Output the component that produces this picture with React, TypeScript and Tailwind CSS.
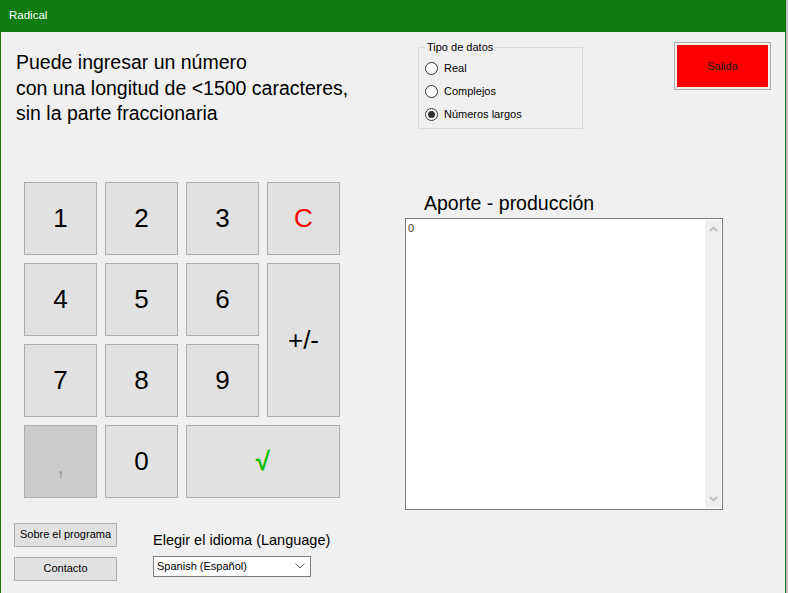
import React from "react";

const ui = { fontFamily: '"Liberation Sans", Arial, sans-serif' };

function Key({
  children, className = "", disabled, color = "text-black",
}: {
  children: React.ReactNode; className?: string; disabled?: boolean; color?: string;
}) {
  return (
    <button
      type="button"
      className={
        "flex items-center justify-center border border-[#adadad] text-[26px] leading-none " +
        (disabled ? "bg-[#cccccc] text-[#a0a0a0]" : "bg-[#e1e1e1] " + color) +
        " " + className
      }
    >
      {children}
    </button>
  );
}

function Radio({ label, checked }: { label: string; checked?: boolean }) {
  return (
    <div className="flex items-center h-[23px]">
      <span className="w-[13px] h-[13px] rounded-full border border-[#333333] bg-white flex items-center justify-center">
        {checked && <span className="w-[7px] h-[7px] rounded-full bg-[#333333]" />}
      </span>
      <span className="ml-[6px] text-[11px] text-black">{label}</span>
    </div>
  );
}

export default function App() {
  return (
    <div className="w-[788px] h-[593px] flex bg-[#bfc3bf] overflow-hidden" style={ui}>
      <div className="w-[786px] h-full flex flex-col border-x border-[#107c10] bg-[#f0f0f0]">
        {/* Title bar */}
        <div className="h-[32px] shrink-0 bg-[#107c10] text-white text-[11.5px] flex items-center pl-[9px] -mx-px">
          Radical
        </div>

        <div className="flex flex-1">
          {/* Left column */}
          <div className="w-[390px] pl-[13px] flex flex-col">
            <p className="mt-[18px] ml-[2px] text-[19.5px] leading-[25.5px] text-black">
              Puede ingresar un número
              <br />
              con una longitud de &lt;1500 caracteres,
              <br />
              sin la parte fraccionaria
            </p>

            <div className="mt-[55px] ml-[10px] grid grid-cols-[73px_73px_73px_73px] grid-rows-[73px_73px_73px_73px] gap-[8px]">
              <Key>1</Key>
              <Key>2</Key>
              <Key>3</Key>
              <Key color="text-[#ff0000]">C</Key>
              <Key>4</Key>
              <Key>5</Key>
              <Key>6</Key>
              <Key className="row-span-2">+/-</Key>
              <Key>7</Key>
              <Key>8</Key>
              <Key>9</Key>
              <Key disabled className="pt-[8px]">,</Key>
              <Key>0</Key>
              <Key className="col-span-2 font-bold" color="text-[#00c000]">√</Key>
            </div>

            <div className="mt-[25px] flex">
              <div className="flex flex-col gap-[10px]">
                <button type="button" className="w-[103px] h-[24px] border border-[#adadad] bg-[#e1e1e1] text-[11px] text-black">
                  Sobre el programa
                </button>
                <button type="button" className="w-[103px] h-[24px] border border-[#adadad] bg-[#e1e1e1] text-[11px] text-black">
                  Contacto
                </button>
              </div>
              <div className="ml-[36px] flex flex-col">
                <span className="mt-[8px] text-[14.5px] leading-[18px] text-black">
                  Elegir el idioma (Language)
                </span>
                <div className="mt-[7px] w-[158px] h-[21px] border border-[#7a7a7a] bg-white flex items-center justify-between pl-[3px] pr-[5px]">
                  <span className="text-[11px] text-black">Spanish (Español)</span>
                  <svg width="10" height="6" viewBox="0 0 10 6" fill="none">
                    <path d="M0.5 0.5 L5 5 L9.5 0.5" stroke="#606060" strokeWidth="1" />
                  </svg>
                </div>
              </div>
            </div>
          </div>

          {/* Right column */}
          <div className="flex flex-col pl-[14px]">
            <div className="flex items-start">
              <fieldset className="ml-[13px] mt-[8px] w-[165px] h-[89px] border border-[#dcdcdc] px-[6px]">
                <legend className="px-[2px] text-[11px] leading-[14px] text-black">Tipo de datos</legend>
                <div className="pt-[3px]">
                  <Radio label="Real" />
                  <Radio label="Complejos" />
                  <Radio label="Números largos" checked />
                </div>
              </fieldset>
              <div className="ml-[91px] mt-[10px] w-[97px] h-[48px] border border-[#adadad] p-[2px]">
                <div className="w-full h-full bg-[#ff0000] flex items-center justify-center text-[11px] text-[#1a1a1a]">
                  Salida
                </div>
              </div>
            </div>

            <span className="mt-[62px] ml-[19px] text-[19.5px] leading-[24px] text-black">
              Aporte - producción
            </span>

            <div className="mt-[3px] w-[318px] h-[292px] border border-[#7a7a7a] bg-white flex">
              <div className="flex-1 pl-[2px] pt-[2px] text-[11px] leading-[14px] text-[#5a3d1a]">0</div>
              <div className="w-[16px] my-px mr-px bg-[#f0f0f0] flex flex-col items-center justify-between py-[6px]">
                <svg width="9" height="6" viewBox="0 0 9 6" fill="none">
                  <path d="M1 5 L4.5 1.5 L8 5" stroke="#c0c0c0" strokeWidth="2" />
                </svg>
                <svg width="9" height="6" viewBox="0 0 9 6" fill="none">
                  <path d="M1 1 L4.5 4.5 L8 1" stroke="#c0c0c0" strokeWidth="2" />
                </svg>
              </div>
            </div>
          </div>
        </div>
      </div>
    </div>
  );
}
